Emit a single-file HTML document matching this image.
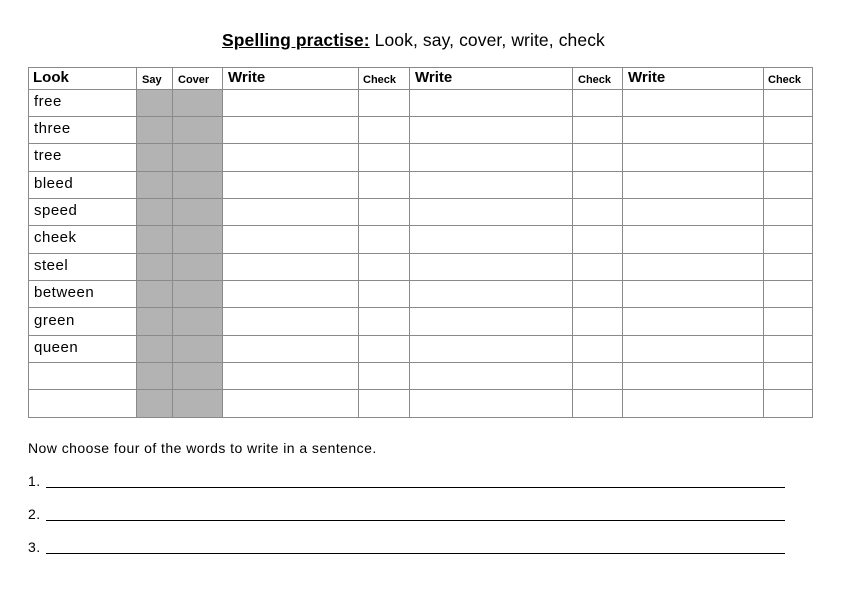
<!DOCTYPE html>
<html><head><style>
body{margin:0;width:842px;height:596px;background:#fff;position:relative;font-family:"Liberation Sans",sans-serif;color:#000;overflow:hidden}
.a{position:absolute;white-space:nowrap}
.h{position:absolute;height:1px;background:#8a8a8a}
.v{position:absolute;width:1px;background:#8a8a8a}
.g{position:absolute;background:#b3b3b3}
.w{font-size:15px;letter-spacing:0.5px}
.hb{font-weight:bold;font-size:15px}
.hs{font-weight:bold;font-size:11px}
.ln{position:absolute;left:46px;width:739px;height:1px;background:#000}
.s{font-size:14px;letter-spacing:0.45px}
</style></head><body>
<div class="a" style="left:222px;top:30px;font-size:17.5px;letter-spacing:0.1px"><b style="text-decoration:underline">Spelling practise:</b> Look, say, cover, write, check</div>

<div class="g" style="left:136px;top:89px;width:86px;height:328px"></div>

<div class="h" style="left:28px;width:785px;top:67px"></div>
<div class="h" style="left:28px;width:785px;top:89px"></div>
<div class="h" style="left:28px;width:785px;top:116px"></div>
<div class="h" style="left:28px;width:785px;top:143px"></div>
<div class="h" style="left:28px;width:785px;top:171px"></div>
<div class="h" style="left:28px;width:785px;top:198px"></div>
<div class="h" style="left:28px;width:785px;top:225px"></div>
<div class="h" style="left:28px;width:785px;top:253px"></div>
<div class="h" style="left:28px;width:785px;top:280px"></div>
<div class="h" style="left:28px;width:785px;top:307px"></div>
<div class="h" style="left:28px;width:785px;top:335px"></div>
<div class="h" style="left:28px;width:785px;top:362px"></div>
<div class="h" style="left:28px;width:785px;top:389px"></div>
<div class="h" style="left:28px;width:785px;top:417px"></div>

<div class="v" style="left:28px;top:67px;height:351px"></div>
<div class="v" style="left:136px;top:67px;height:351px"></div>
<div class="v" style="left:172px;top:67px;height:351px"></div>
<div class="v" style="left:222px;top:67px;height:351px"></div>
<div class="v" style="left:358px;top:67px;height:351px"></div>
<div class="v" style="left:409px;top:67px;height:351px"></div>
<div class="v" style="left:572px;top:67px;height:351px"></div>
<div class="v" style="left:622px;top:67px;height:351px"></div>
<div class="v" style="left:763px;top:67px;height:351px"></div>
<div class="v" style="left:812px;top:67px;height:351px"></div>

<div class="a hb" style="left:33px;top:69px">Look</div>
<div class="a hs" style="left:142px;top:74px">Say</div>
<div class="a hs" style="left:178px;top:74px">Cover</div>
<div class="a hb" style="left:228px;top:69px">Write</div>
<div class="a hs" style="left:363px;top:74px">Check</div>
<div class="a hb" style="left:415px;top:69px">Write</div>
<div class="a hs" style="left:578px;top:74px">Check</div>
<div class="a hb" style="left:628px;top:69px">Write</div>
<div class="a hs" style="left:768px;top:74px">Check</div>

<div class="a w" style="left:34px;top:93px">free</div>
<div class="a w" style="left:34px;top:120px">three</div>
<div class="a w" style="left:34px;top:147px">tree</div>
<div class="a w" style="left:34px;top:175px">bleed</div>
<div class="a w" style="left:34px;top:202px">speed</div>
<div class="a w" style="left:34px;top:229px">cheek</div>
<div class="a w" style="left:34px;top:257px">steel</div>
<div class="a w" style="left:34px;top:284px">between</div>
<div class="a w" style="left:34px;top:312px">green</div>
<div class="a w" style="left:34px;top:339px">queen</div>

<div class="a s" style="left:28px;top:440px">Now choose four of the words to write in a sentence.</div>
<div class="a s" style="left:28px;top:473px">1.</div>
<div class="ln" style="top:487px"></div>
<div class="a s" style="left:28px;top:506px">2.</div>
<div class="ln" style="top:520px"></div>
<div class="a s" style="left:28px;top:539px">3.</div>
<div class="ln" style="top:553px"></div>
</body></html>
